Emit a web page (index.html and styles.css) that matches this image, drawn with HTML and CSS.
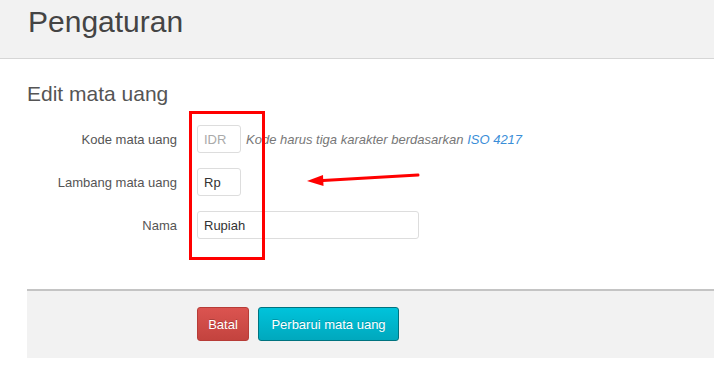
FILE: index.html
```html
<!DOCTYPE html>
<html lang="id">
<head>
    <meta charset="UTF-8">
    <meta name="viewport" content="width=device-width, initial-scale=1.0">
    <title>Pengaturan</title>
    <link rel="stylesheet" href="styles.css">
</head>
<body>
    <div class="page-header">
        <h1>Pengaturan</h1>
    </div>
    <div class="content">
        <h2>Edit mata uang</h2>
        <form class="form">
            <div class="row">
                <label>Kode mata uang</label>
                <div class="field">
                    <input class="input short" type="text" placeholder="IDR" disabled>
                    <span class="help">Kode harus tiga karakter berdasarkan <a href="#">ISO 4217</a></span>
                </div>
            </div>
            <div class="row">
                <label>Lambang mata uang</label>
                <div class="field">
                    <input class="input short" type="text" value="Rp">
                </div>
            </div>
            <div class="row">
                <label>Nama</label>
                <div class="field">
                    <input class="input wide" type="text" value="Rupiah">
                </div>
            </div>
            <div class="actions">
                <button type="button" class="btn cancel">Batal</button>
                <button type="button" class="btn update">Perbarui mata uang</button>
            </div>
        </form>
    </div>
    <!-- annotation -->
    <div class="mark"></div>
    <svg class="arrow" width="130" height="20" viewBox="0 0 130 20">
        <line x1="115" y1="5" x2="20" y2="10.5" stroke="#f00" stroke-width="3" stroke-linecap="round"/>
        <polygon points="4,11 20,5 20.5,16" fill="#f00"/>
    </svg>
</body>
</html>
```

FILE: styles.css
```css
* {
    margin: 0;
    padding: 0;
    box-sizing: border-box;
}
body {
    font-family: "Liberation Sans", Arial, sans-serif;
    color: #555;
    background: #fff;
}
.page-header {
    height: 59px;
    background: #f2f2f2;
    border-bottom: 1px solid #d6d6d6;
    padding: 2px 28px 0;
}
.page-header h1 {
    font-size: 30px;
    font-weight: normal;
    line-height: 40px;
    color: #444;
}
.content {
    padding: 20px 0 0 27px;
}
.content h2 {
    font-size: 21px;
    font-weight: normal;
    line-height: 30px;
    color: #555;
}
.form {
    margin-top: 16px;
}
.row {
    display: grid;
    grid-template-columns: 150px auto;
    column-gap: 20px;
    align-items: center;
    margin-bottom: 15px;
    font-size: 13px;
}
.row label {
    text-align: right;
    color: #555;
}
.field {
    display: flex;
    align-items: center;
    gap: 5px;
}
.input {
    height: 28px;
    border: 1px solid #ddd;
    border-radius: 3px;
    padding: 0 6px;
    font-family: "Liberation Sans", Arial, sans-serif;
    font-size: 13px;
    color: #333;
    background: #fff;
}
.input::placeholder {
    color: #aaa;
}
.short { width: 44px; }
.wide { width: 222px; }
.help {
    font-style: italic;
    color: #777;
}
.help a {
    color: #3a8ed8;
    text-decoration: none;
}
.actions {
    margin-top: 50px;
    background: #f2f2f2;
    border-top: 2px solid #c4c4c4;
    padding: 16px 0 17px 170px;
    display: flex;
    gap: 9px;
}
.btn {
    height: 34px;
    border-radius: 3px;
    font-family: "Liberation Sans", Arial, sans-serif;
    font-size: 13px;
    color: #fff;
    text-shadow: 0 -1px 0 rgba(0, 0, 0, 0.2);
    cursor: pointer;
}
.cancel {
    width: 52px;
    background: linear-gradient(#db5450, #c3433e);
    border: 1px solid #b73c37;
}
.update {
    width: 141px;
    background: linear-gradient(#00c3db, #00a8bd);
    border: 1px solid #00737f;
}
.mark {
    position: absolute;
    left: 189px;
    top: 111px;
    width: 76px;
    height: 149px;
    border: 3px solid #f00;
}
.arrow {
    position: absolute;
    left: 303px;
    top: 170px;
}
```
